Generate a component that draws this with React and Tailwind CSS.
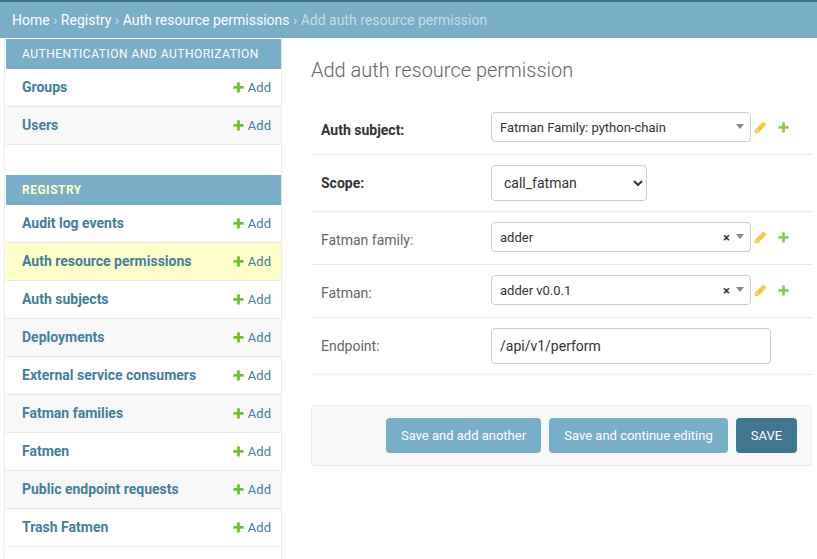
import React from "react";

const PLUS =
  "M1600 796v192q0 40-28 68t-68 28h-416v416q0 40-28 68t-68 28h-192q-40 0-68-28t-28-68v-416h-416q-40 0-68-28t-28-68v-192q0-40 28-68t68-28h416v-416q0-40 28-68t68-28h192q40 0 68 28t28 68v416h416q40 0 68 28t28 68z";
const PENCIL =
  "M491 1536l91-91-235-235-91 91v107h128v128h107zm523-928q0-22-22-22-10 0-17 7l-542 542q-7 7-7 17 0 22 22 22 10 0 17-7l542-542q7-7 7-17zm-54-192l416 416-832 832h-416v-416zm683 96q0 53-37 90l-166 166-416-416 166-165q36-38 90-38 53 0 91 38l235 234q37 39 37 91z";

function Icon({ path, className }) {
  return (
    <svg viewBox="0 0 1792 1792" className={className} fill="currentColor">
      <path d={path} />
    </svg>
  );
}

function ModelRow({ name, className }) {
  return (
    <div className={`flex h-[38px] items-start justify-between border-b border-[#e8e8e8] pt-2 pr-[10px] pl-4 text-[#447e9b] ${className}`}>
      <a className="text-[14px] leading-5 font-bold">{name}</a>
      <a className="flex items-start gap-[3px] text-[13px] leading-[21px]">
        <Icon path={PLUS} className="mt-1 size-[13px] text-[#70bf2b]" />
        Add
      </a>
    </div>
  );
}

function Sidebar() {
  const auth = ["Groups", "Users"];
  const registry = [
    "Audit log events",
    "Auth resource permissions",
    "Auth subjects",
    "Deployments",
    "External service consumers",
    "Fatman families",
    "Fatmen",
    "Public endpoint requests",
    "Trash Fatmen",
  ];
  return (
    <nav className="ml-1 h-[521px] w-[278px] shrink-0 border-x border-[#eaeaea] pt-px pl-px">
      <h2 className="h-[30px] bg-[#79aec8] pl-4 text-[12px] leading-[30px] tracking-[0.5px] text-white uppercase">
        Authentication and Authorization
      </h2>
      {auth.map((n, i) => (
        <ModelRow key={n} name={n} className={i % 2 ? "bg-[#f8f8f8]" : "bg-white"} />
      ))}
      <h2 className="mt-[30px] h-[30px] bg-[#79aec8] pl-4 text-[12px] leading-[30px] font-bold tracking-[0.5px] text-[#ffffcc] uppercase">
        Registry
      </h2>
      {registry.map((n, i) => (
        <ModelRow key={n} name={n} className={i === 1 ? "bg-[#ffffcc]" : i % 2 ? "bg-[#f8f8f8]" : "bg-white"} />
      ))}
    </nav>
  );
}

function FormRow({ label, bold, height, children }) {
  return (
    <div className={`flex items-start border-b border-[#e8e8e8] px-[10px] pt-[10px] ${height}`}>
      <label className={`mt-2 w-[170px] text-[14px] leading-5 ${bold ? "font-bold text-[#333]" : "text-[#666]"}`}>{label}</label>
      {children}
    </div>
  );
}

function RelatedSelect({ value, clearable }) {
  return (
    <>
      <div className="flex h-[30px] w-[260px] items-center rounded-[4px] border border-[#ccc] pr-[6px] pl-2 text-[13px] text-[#333]">
        <span className="flex-1 pt-px leading-7">{value}</span>
        {clearable && <span className="mr-[6px] pt-px leading-7 font-bold">×</span>}
        <span className="-mt-px h-0 w-0 border-x-4 border-t-5 border-x-transparent border-t-[#888]" />
      </div>
      <Icon path={PENCIL} className="mt-[9px] ml-[3px] size-[13px] stroke-current stroke-[50] text-[#efb80b] opacity-80" />
      <Icon path={PLUS} className="mt-[9px] ml-[10px] size-[13px] text-[#70bf2b] opacity-80" />
    </>
  );
}

function Button({ className, children }) {
  return <button className={`h-[35px] rounded-[4px] text-[13px] text-white ${className}`}>{children}</button>;
}

export default function App() {
  return (
    <div className="h-[559px] w-[817px] overflow-hidden bg-white font-['Roboto','Liberation_Sans',sans-serif]">
      <div className="h-[38px] border-t-2 border-[#417690] bg-[#79aec8] pt-2 pl-3 text-[14px] leading-5 whitespace-pre text-[#c4dce8]">
        <a className="text-white">Home</a>
        {" › "}
        <a className="text-white">Registry</a>
        {" › "}
        <a className="text-white">Auth resource permissions</a>
        {" › Add auth resource permission"}
      </div>
      <div className="flex">
        <Sidebar />
        <main className="ml-[29px] w-[501px] shrink-0 pt-5">
          <h1 className="mb-[20px] text-[20px] leading-6 font-light text-[#666]">Add auth resource permission</h1>
          <FormRow label="Auth subject:" bold height="h-[53px]">
            <RelatedSelect value="Fatman Family: python-chain" />
          </FormRow>
          <FormRow label="Scope:" bold height="h-[57px]">
            <div className="flex h-9 w-[156px] items-center justify-between rounded-[4px] border border-[#ccc] pr-[3px] pl-3 text-[14px] text-[#333]">
              call_fatman
              <svg viewBox="0 0 10 8" className="h-2 w-[10px]" fill="none" stroke="#333" strokeWidth="2">
                <path d="M1 2l4 4 4-4" />
              </svg>
            </div>
          </FormRow>
          <FormRow label="Fatman family:" height="h-[53px]">
            <RelatedSelect value="adder" clearable />
          </FormRow>
          <FormRow label="Fatman:" height="h-[53px]">
            <RelatedSelect value="adder v0.0.1" clearable />
          </FormRow>
          <FormRow label="Endpoint:" height="h-[57px]">
            <input
              className="h-9 w-[280px] rounded-[4px] border border-[#ccc] px-2 text-[14px] text-[#333]"
              defaultValue="/api/v1/perform"
            />
          </FormRow>
          <div className="mt-[30px] flex h-[61px] items-center justify-end gap-2 rounded-[4px] border border-[#eaeaea] bg-[#f8f8f8] pr-[14px]">
            <Button className="w-[155px] bg-[#79aec8]">Save and add another</Button>
            <Button className="w-[179px] bg-[#79aec8]">Save and continue editing</Button>
            <Button className="w-[61px] bg-[#417690]">SAVE</Button>
          </div>
        </main>
      </div>
    </div>
  );
}
